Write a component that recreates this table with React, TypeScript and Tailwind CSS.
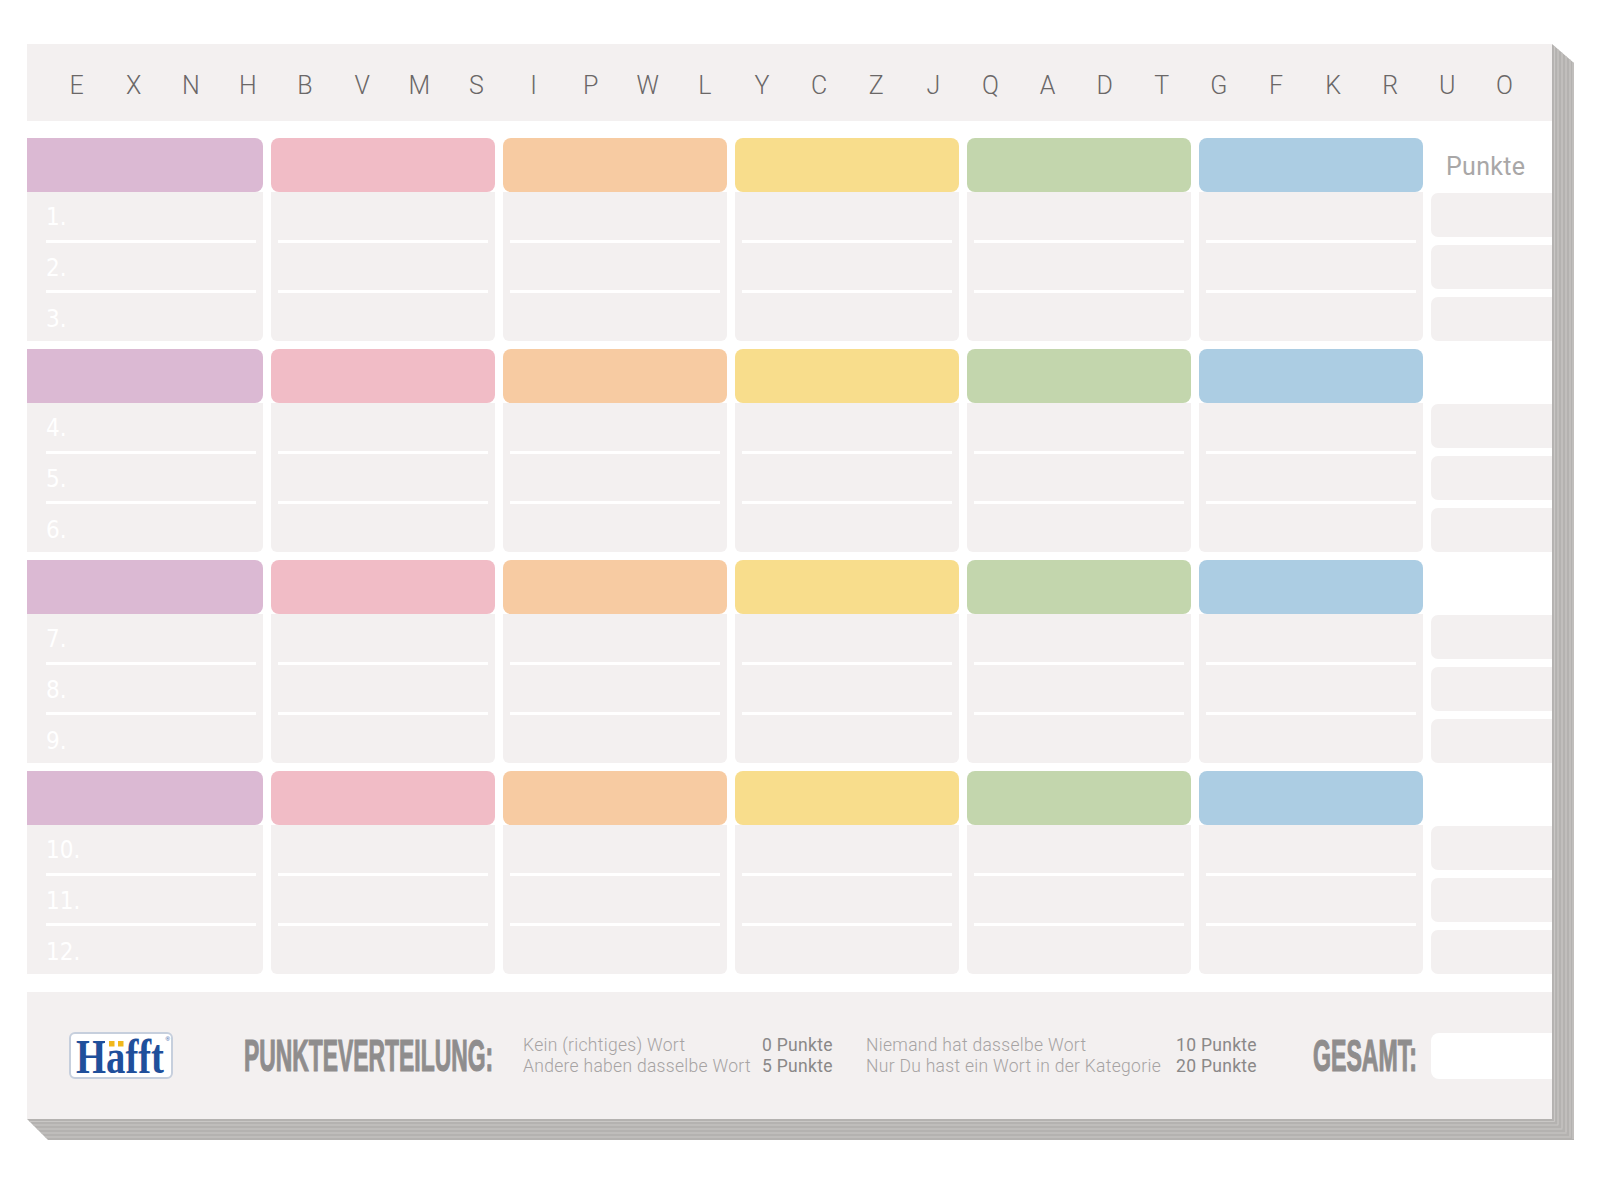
import React from 'react'

const LETTERS = 'EXNHBVMSIPWLYCZJQADTGFKRUO'.split('')
const HEADS = ['bg-[#dbb9d3]', 'bg-[#f1bcc6]', 'bg-[#f7cba2]', 'bg-[#f8dd8c]', 'bg-[#c3d6ad]', 'bg-[#accde3]']
const GROUPS = [
  ['1.', '2.', '3.'],
  ['4.', '5.', '6.'],
  ['7.', '8.', '9.'],
  ['10.', '11.', '12.'],
]

// edges of the pad below the top sheet
function PadStack() {
  const vx = [1527.5, 1531, 1535, 1539, 1543, 1546]
  const hy = [1077.5, 1081, 1085, 1089, 1093]
  return (
    <svg className="absolute left-0 top-0" width="1547" height="1096" viewBox="0 0 1547 1096">
      <polygon points="1525,0 1547,19 1547,1096 21,1096 0,1075 1525,1075" fill="#b4b2b0" />
      {vx.map((x) => (
        <line
          key={x}
          x1={x}
          x2={x}
          y1={((x - 1525) * 19) / 22}
          y2={1075 + ((x - 1525) * 21) / 22}
          stroke="#c9c7c5"
          strokeWidth="1.2"
        />
      ))}
      {hy.map((y) => (
        <line
          key={y}
          y1={y}
          y2={y}
          x1={y - 1075}
          x2={1525 + ((y - 1075) * 22) / 21}
          stroke="#c9c7c5"
          strokeWidth="1.2"
        />
      ))}
    </svg>
  )
}

function Logo() {
  return (
    <svg width="104" height="47" viewBox="0 0 104 47" className="shrink-0">
      <defs>
        <clipPath id="noDots">
          <rect x="0" y="0" width="36" height="47" />
          <rect x="36" y="16" width="22" height="31" />
          <rect x="58" y="0" width="46" height="47" />
        </clipPath>
      </defs>
      <rect x="1" y="1" width="102" height="45" rx="5" fill="#fff" stroke="#c6cfdd" strokeWidth="2" />
      <text
        x="7"
        y="40.5"
        textLength="88"
        lengthAdjust="spacingAndGlyphs"
        fontFamily="'Liberation Serif', serif"
        fontWeight="700"
        fontSize="48"
        fill="#1f4f9b"
        clipPath="url(#noDots)"
      >
        Häfft
      </text>
      <rect x="40" y="9" width="5.5" height="5.5" fill="#f1b81c" />
      <rect x="49" y="9" width="5.5" height="5.5" fill="#f1b81c" />
      <text x="96.5" y="8.5" fontFamily="'Liberation Sans', sans-serif" fontSize="6" fill="#1f4f9b">
        ®
      </text>
    </svg>
  )
}

function Column({ color, first, nums }: { color: string; first: boolean; nums: string[] }) {
  return (
    <div className="flex flex-col">
      <div className={`h-[54px] ${color} ${first ? 'rounded-r-[8px]' : 'rounded-[8px]'}`} />
      <div className={`flex h-[149px] flex-col bg-[#f3f0f0] ${first ? 'rounded-br-[6px]' : 'rounded-b-[6px]'}`}>
        {nums.map((n, i) => (
          <React.Fragment key={n}>
            {i > 0 && <div className={`h-[3px] bg-white ${first ? 'ml-[19px] mr-[7px]' : 'mx-[7px]'}`} />}
            <div className="flex flex-1 items-center pl-[19px] pt-[3px]">
              {first && (
                <span className="font-['DejaVu_Sans_Condensed','DejaVu_Sans',sans-serif] text-[24px] leading-none text-white">
                  {n}
                </span>
              )}
            </div>
          </React.Fragment>
        ))}
      </div>
    </div>
  )
}

function Group({ nums, label }: { nums: string[]; label: boolean }) {
  return (
    <div className="grid grid-cols-[236px_repeat(5,224px)_121px] gap-x-2">
      {HEADS.map((c, i) => (
        <Column key={c} color={c} first={i === 0} nums={nums} />
      ))}
      <div className="flex flex-col">
        <div className="flex h-[54px] items-center pl-[15px] pt-[2px]">
          {label && <span className="text-[25px] leading-none tracking-[0.3px] text-[#a9a7a7]">Punkte</span>}
        </div>
        <div className="flex h-[149px] flex-col gap-2 pt-px">
          <div className="h-[44px] rounded-l-[7px] bg-[#f3f0f0]" />
          <div className="h-[44px] rounded-l-[7px] bg-[#f3f0f0]" />
          <div className="h-[44px] rounded-l-[7px] bg-[#f3f0f0]" />
        </div>
      </div>
    </div>
  )
}

export default function App() {
  return (
    <div className="min-h-screen bg-white pl-[27px] pt-[44px] font-['Roboto','Liberation_Sans',sans-serif]">
      <div className="relative w-[1525px]">
        <PadStack />
        <div className="relative flex h-[1075px] flex-col bg-white">
          <div className="flex h-[77px] items-center bg-[#f3f0f0]">
            <div className="ml-[21px] mt-[6px] grid w-[1485px] grid-cols-[repeat(26,minmax(0,1fr))]">
              {LETTERS.map((l) => (
                <span key={l} className="text-center text-[25px] font-light leading-none text-[#6a6767]">
                  {l}
                </span>
              ))}
            </div>
          </div>

          <div className="mt-[17px] flex flex-col gap-2">
            {GROUPS.map((g, i) => (
              <Group key={g[0]} nums={g} label={i === 0} />
            ))}
          </div>

          <div className="mt-[18px] flex h-[127px] items-center bg-[#f3f0f0]">
            <div className="ml-[42px]">
              <Logo />
            </div>
            <div className="ml-[71px] w-[252px] shrink-0">
              <span className="inline-block origin-left scale-x-[0.52] whitespace-nowrap font-['Liberation_Sans',sans-serif] text-[44px] font-bold leading-none text-[#8f8d8d] [-webkit-text-stroke:1.2px_#8f8d8d]">
                PUNKTEVERTEILUNG:
              </span>
            </div>
            <div className="ml-[27px] grid shrink-0 grid-cols-[239px_104px_310px_78px] whitespace-nowrap text-[17.5px] leading-[21px] tracking-[0.3px]">
              <span className="font-light text-[#a6a3a3]">Kein (richtiges) Wort</span>
              <span className="text-[#8a8888]">0 Punkte</span>
              <span className="font-light text-[#a6a3a3]">Niemand hat dasselbe Wort</span>
              <span className="text-[#8a8888]">10 Punkte</span>
              <span className="font-light text-[#a6a3a3]">Andere haben dasselbe Wort</span>
              <span className="text-[#8a8888]">5 Punkte</span>
              <span className="font-light text-[#a6a3a3]">Nur Du hast ein Wort in der Kategorie</span>
              <span className="text-[#8a8888]">20 Punkte</span>
            </div>
            <div className="ml-[59px] w-[104px] shrink-0">
              <span className="inline-block origin-left scale-x-[0.525] whitespace-nowrap font-['Liberation_Sans',sans-serif] text-[44px] font-bold leading-none text-[#8f8d8d] [-webkit-text-stroke:1.2px_#8f8d8d]">
                GESAMT:
              </span>
            </div>
            <div className="ml-[14px] h-[46px] w-[121px] shrink-0 rounded-l-[8px] bg-white" />
          </div>
        </div>
      </div>
    </div>
  )
}
